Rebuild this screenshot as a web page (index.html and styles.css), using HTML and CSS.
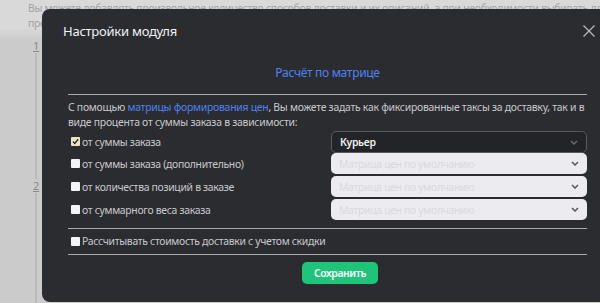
FILE: index.html
```html
<!DOCTYPE html>
<html lang="ru">
<head>
    <meta charset="UTF-8">
    <meta name="viewport" content="width=device-width, initial-scale=1.0">
    <title>Настройки модуля</title>
    <link rel="stylesheet" href="styles.css">
</head>
<body>

    <!-- Page behind the modal -->
    <div class="page">
        <p class="page-intro">
            <span class="intro-line">Вы можете добавлять произвольное количество способов доставки и их описаний, а при необходимости выбирать для нужных модулей</span>
            <span class="intro-line">предпочтительный способ.</span>
        </p>
        <ol class="steps">
            <li class="step"><span class="step-num">1</span></li>
            <li class="step"><span class="step-num">2</span></li>
        </ol>
    </div>

    <!-- Modal -->
    <div class="modal">
        <div class="modal-head">
            <h2 class="modal-title">Настройки модуля</h2>
            <button class="modal-close" aria-label="Закрыть">
                <svg width="12" height="12" viewBox="0 0 12 12">
                    <path d="M0.5 0.5L11.5 11.5M11.5 0.5L0.5 11.5" stroke="#b9b9bd" stroke-width="1.3" fill="none"/>
                </svg>
            </button>
        </div>

        <div class="modal-body">
            <h3 class="subtitle">Расчёт по матрице</h3>
            <hr class="divider">

            <p class="hint">С помощью <a href="#">матрицы формирования цен</a>, Вы можете задать как фиксированные таксы за доставку, так и в виде процента от суммы заказа в зависимости:</p>

            <div class="rows">
                <div class="row">
                    <label class="check"><span class="box checked"><svg width="9" height="9" viewBox="0 0 9 9"><path d="M2 4.6L3.8 6.4L7.2 2.2" stroke="#2b2b2b" stroke-width="1.4" fill="none"/></svg></span>от суммы заказа</label>
                    <div class="select select-dark">
                        <span>Курьер</span>
                        <svg class="chev" width="8" height="5" viewBox="0 0 8 5"><path d="M1 1L4 4L7 1" stroke="#6e6f74" stroke-width="1.4" fill="none"/></svg>
                    </div>
                </div>
                <div class="row">
                    <label class="check"><span class="box"></span>от суммы заказа (дополнительно)</label>
                    <div class="select">
                        <span>Матрица цен по умолчанию</span>
                        <svg class="chev" width="8" height="5" viewBox="0 0 8 5"><path d="M1 1L4 4L7 1" stroke="#55565b" stroke-width="1.5" fill="none"/></svg>
                    </div>
                </div>
                <div class="row">
                    <label class="check"><span class="box"></span>от количества позиций в заказе</label>
                    <div class="select">
                        <span>Матрица цен по умолчанию</span>
                        <svg class="chev" width="8" height="5" viewBox="0 0 8 5"><path d="M1 1L4 4L7 1" stroke="#55565b" stroke-width="1.5" fill="none"/></svg>
                    </div>
                </div>
                <div class="row">
                    <label class="check"><span class="box"></span>от суммарного веса заказа</label>
                    <div class="select">
                        <span>Матрица цен по умолчанию</span>
                        <svg class="chev" width="8" height="5" viewBox="0 0 8 5"><path d="M1 1L4 4L7 1" stroke="#55565b" stroke-width="1.5" fill="none"/></svg>
                    </div>
                </div>
            </div>

            <hr class="divider divider-mid">
            <label class="check check-discount"><span class="box"></span>Рассчитывать стоимость доставки с учетом скидки</label>
            <hr class="divider divider-low">

            <div class="actions">
                <button class="btn-save">Сохранить</button>
            </div>
        </div>
    </div>

</body>
</html>
```

FILE: styles.css
```css
body {
    margin: 0;
    padding: 0;
    width: 600px;
    height: 303px;
    overflow: hidden;
    background: #cbcbcb;
    font-family: "Noto Sans", "Open Sans", sans-serif;
    position: relative;
}

/* Page behind the modal */
.page {
    padding: 0 0 0 28px;
    background: linear-gradient(to bottom, #d9d9d9 0, #d9d9d9 28px, #cbcbcb 40px);
    height: 303px;
    box-sizing: border-box;
    overflow: hidden;
}

.page-intro {
    margin: 0;
    padding-top: 1px;
    font-size: 10.4px;
    letter-spacing: -0.25px;
    line-height: 15px;
    color: #a3a3a3;
}

.intro-line {
    display: block;
    white-space: nowrap;
}

.steps {
    list-style: none;
    margin: 0;
    padding: 8px 0 0 7px;
}

.step {
    height: 140px;
    border-left: 2px solid #b9b9b9;
}

.step-num {
    display: block;
    margin-left: -4px;
    width: 8px;
    background: #cbcbcb;
    font-size: 11px;
    line-height: 14px;
    color: #8a8a8a;
    text-decoration: underline;
}

/* Modal */
.modal {
    position: absolute;
    left: 42px;
    top: 9px;
    width: 558px;
    height: 293px;
    background: #2b2c30;
    border-radius: 8px 0 0 8px;
    color: #cfcfd3;
}

.modal-head {
    height: 44px;
    padding: 0 5px 0 21px;
    display: flex;
    align-items: center;
    justify-content: space-between;
}

.modal-title {
    margin: 0;
    font-size: 13px;
    letter-spacing: -0.25px;
    font-weight: normal;
    color: #f2f2f4;
}

.modal-close {
    background: none;
    border: none;
    padding: 0;
    width: 12px;
    height: 12px;
    cursor: pointer;
}

.modal-close svg {
    display: block;
}

.modal-body {
    padding: 0 13px 0 26px;
}

.subtitle {
    margin: 0;
    padding-top: 10px;
    height: 20px;
    line-height: 20px;
    font-size: 12px;
    letter-spacing: -0.3px;
    font-weight: normal;
    text-align: center;
    color: #4d82f3;
}

.divider {
    margin: 11px 0 0;
    border: none;
    height: 1px;
    background: #a9a9ad;
}

.hint {
    margin: 5px 0 0;
    font-size: 10.4px;
    letter-spacing: -0.25px;
    line-height: 15px;
    color: #c9c9cd;
}

.hint a {
    color: #4d82f3;
    text-decoration: none;
}

.rows {
    display: flex;
    flex-direction: column;
    gap: 2px;
}

.row {
    display: grid;
    grid-template-columns: 1fr 256px;
    align-items: center;
    height: 21px;
}

.check {
    display: flex;
    align-items: center;
    font-size: 10.4px;
    letter-spacing: -0.3px;
    color: #c9c9cd;
    padding-left: 3px;
}

.box {
    width: 9px;
    height: 9px;
    background: #f4f4f6;
    border-radius: 1px;
    margin-right: 2px;
    flex-shrink: 0;
}

.box.checked {
    background: #efe3c3;
}

.box svg {
    display: block;
}

.select {
    height: 21px;
    box-sizing: border-box;
    border-radius: 5px;
    background: #ececf0;
    display: flex;
    align-items: center;
    justify-content: space-between;
    padding: 0 8px;
    font-size: 10.4px;
    letter-spacing: -0.3px;
    color: #d9d9de;
}

.select-dark {
    background: #232428;
    border: 1px solid #58595e;
    color: #f2f2f4;
    font-weight: 600;
    height: 22px;
    margin-top: 1px;
}

.chev {
    display: block;
}

.divider-mid {
    margin-top: 8px;
}

.check-discount {
    margin-top: 4px;
    height: 16px;
}

.divider-low {
    margin-top: 5px;
}

.actions {
    text-align: center;
    padding-left: 25px;
    margin-top: 5px;
}

.btn-save {
    width: 76px;
    height: 22px;
    border: none;
    border-radius: 5px;
    background: #1fc379;
    color: #ffffff;
    font-family: "Noto Sans", sans-serif;
    font-size: 10.4px;
    letter-spacing: -0.4px;
    font-weight: 600;
    cursor: pointer;
}
```
